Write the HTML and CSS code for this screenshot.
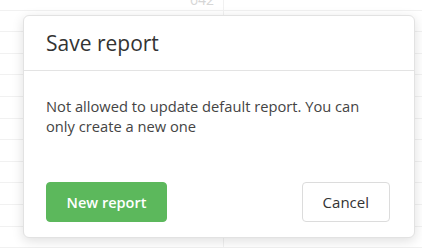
FILE: index.html
```html
<!doctype html>
<html>

<head>
    <title>Save report</title>
    <link rel="stylesheet" href="styles.css">
</head>

<body>
    <div class="tabell">
        <div class="rad"><div class="celle">642</div><div class="celle"></div></div>
        <div class="rad"><div class="celle"></div><div class="celle"></div></div>
        <div class="rad"><div class="celle"></div><div class="celle"></div></div>
        <div class="rad"><div class="celle"></div><div class="celle"></div></div>
        <div class="rad"><div class="celle"></div><div class="celle"></div></div>
        <div class="rad"><div class="celle"></div><div class="celle"></div></div>
        <div class="rad"><div class="celle"></div><div class="celle"></div></div>
        <div class="rad"><div class="celle"></div><div class="celle"></div></div>
        <div class="rad"><div class="celle"></div><div class="celle"></div></div>
        <div class="rad"><div class="celle"></div><div class="celle"></div></div>
        <div class="rad"><div class="celle">g</div><div class="celle"></div></div>
        <div class="rad"><div class="celle"></div><div class="celle"></div></div>
    </div>

    <div class="modal">
        <div class="modal-header">
            <h2>Save report</h2>
        </div>
        <div class="modal-body">
            Not allowed to update default report. You can only create a new one
        </div>
        <div class="modal-footer">
            <button class="knapp knapp-gronn">New report</button>
            <button class="knapp">Cancel</button>
        </div>
    </div>
</body>

</html>
```

FILE: styles.css
```css
body {
    margin: 0;
    background-color: white;
    font-family: "Open Sans", "Noto Sans", sans-serif;
    color: #333;
    overflow: hidden;
}

.tabell {
    margin-top: -11px;
}

.rad {
    display: flex;
    height: 21.6px;
    box-sizing: border-box;
    border-bottom: 1px solid #f1f1f1;
}

.celle {
    width: 224px;
    box-sizing: border-box;
    border-right: 1px solid #f1f1f1;
    padding-right: 9px;
    text-align: right;
    font-size: 14px;
    line-height: 21px;
    color: #d6d6d6;
}

.celle + .celle {
    flex: 1;
    border-right: none;
}

.modal {
    position: absolute;
    left: 23px;
    top: 15px;
    width: 392px;
    height: 223px;
    box-sizing: border-box;
    background-color: white;
    border: 1px solid #e2e2e2;
    border-radius: 6px;
    box-shadow: 0 3px 12px rgba(0, 0, 0, 0.13);
    display: flex;
    flex-direction: column;
}

.modal-header {
    height: 55px;
    box-sizing: border-box;
    padding: 0 22px;
    border-bottom: 1px solid #e3e3e3;
    display: flex;
    align-items: center;
}

.modal-header h2 {
    margin: 0;
    font-size: 21px;
    font-weight: normal;
    color: #333;
}

.modal-body {
    padding: 25px 26px 0 22px;
    font-size: 14.7px;
    line-height: 20px;
    color: #444;
    flex: 1;
}

.modal-footer {
    display: flex;
    justify-content: space-between;
    padding: 0 24px 15px 22px;
}

.knapp {
    height: 40px;
    padding: 0 20px;
    font-family: "Open Sans", "Noto Sans", sans-serif;
    font-size: 15px;
    color: #333;
    background-color: white;
    border: 1px solid #dcdcdc;
    border-radius: 4px;
    white-space: nowrap;
}

.knapp-gronn {
    width: 121px;
    padding: 0;
    font-size: 14.5px;
    font-weight: 600;
    background-color: #5cb85c;
    border-color: #5cb85c;
    color: white;
}
```
